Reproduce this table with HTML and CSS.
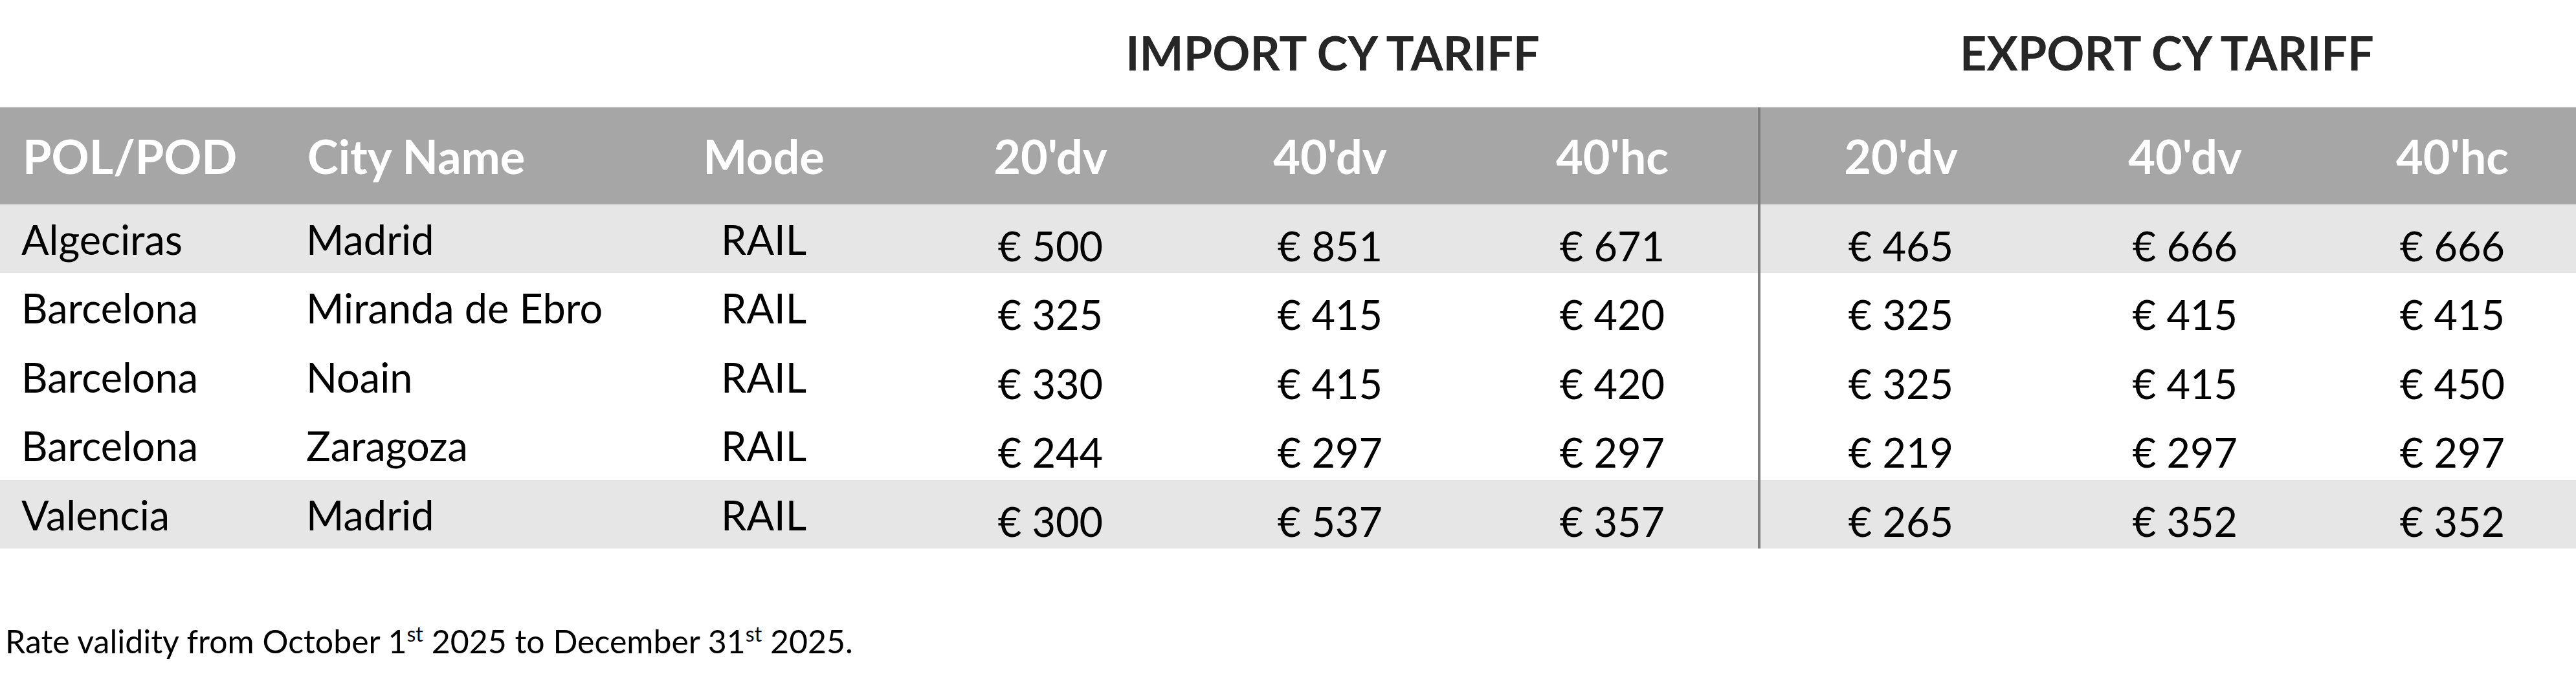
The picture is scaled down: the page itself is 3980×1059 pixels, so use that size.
FILE: index.html
```html
<!DOCTYPE html>
<html lang="en">
<head>
<meta charset="utf-8">
<title>CY Tariff</title>
<link rel="stylesheet" href="styles.css">
</head>
<body>
<div class="sheet">
  <div class="titles">
    <div class="title title-import">IMPORT CY TARIFF</div>
    <div class="title title-export">EXPORT CY TARIFF</div>
  </div>
  <div class="table">
    <div class="row head">
      <div class="cell left">POL/POD</div>
      <div class="cell left">City Name</div>
      <div class="cell center">Mode</div>
      <div class="cell center">20'dv</div>
      <div class="cell center">40'dv</div>
      <div class="cell center">40'hc</div>
      <div class="cell center sep">20'dv</div>
      <div class="cell center">40'dv</div>
      <div class="cell center">40'hc</div>
    </div>
    <div class="row body shade">
      <div class="cell left">Algeciras</div>
      <div class="cell left">Madrid</div>
      <div class="cell center">RAIL</div>
      <div class="cell center num">€ 500</div>
      <div class="cell center num">€ 851</div>
      <div class="cell center num">€ 671</div>
      <div class="cell center num sep">€ 465</div>
      <div class="cell center num">€ 666</div>
      <div class="cell center num">€ 666</div>
    </div>
    <div class="row body">
      <div class="cell left">Barcelona</div>
      <div class="cell left">Miranda de Ebro</div>
      <div class="cell center">RAIL</div>
      <div class="cell center num">€ 325</div>
      <div class="cell center num">€ 415</div>
      <div class="cell center num">€ 420</div>
      <div class="cell center num sep">€ 325</div>
      <div class="cell center num">€ 415</div>
      <div class="cell center num">€ 415</div>
    </div>
    <div class="row body">
      <div class="cell left">Barcelona</div>
      <div class="cell left">Noain</div>
      <div class="cell center">RAIL</div>
      <div class="cell center num">€ 330</div>
      <div class="cell center num">€ 415</div>
      <div class="cell center num">€ 420</div>
      <div class="cell center num sep">€ 325</div>
      <div class="cell center num">€ 415</div>
      <div class="cell center num">€ 450</div>
    </div>
    <div class="row body">
      <div class="cell left">Barcelona</div>
      <div class="cell left">Zaragoza</div>
      <div class="cell center">RAIL</div>
      <div class="cell center num">€ 244</div>
      <div class="cell center num">€ 297</div>
      <div class="cell center num">€ 297</div>
      <div class="cell center num sep">€ 219</div>
      <div class="cell center num">€ 297</div>
      <div class="cell center num">€ 297</div>
    </div>
    <div class="row body shade">
      <div class="cell left">Valencia</div>
      <div class="cell left">Madrid</div>
      <div class="cell center">RAIL</div>
      <div class="cell center num">€ 300</div>
      <div class="cell center num">€ 537</div>
      <div class="cell center num">€ 357</div>
      <div class="cell center num sep">€ 265</div>
      <div class="cell center num">€ 352</div>
      <div class="cell center num">€ 352</div>
    </div>
  </div>
  <p class="note">Rate validity from October 1<sup>st</sup> 2025 to December 31<sup>st</sup> 2025.</p>
</div>
</body>
</html>
```

FILE: styles.css
```css
* {
  box-sizing: border-box;
}

html, body {
  margin: 0;
  padding: 0;
  background: #ffffff;
}

body {
  font-family: Lato, "Open Sans", "Liberation Sans", sans-serif;
  color: #000000;
  width: 3980px;
  height: 1059px;
  overflow: hidden;
}

.sheet {
  --cols: 440px 518px 444px 442px 422px 450px 438px 444px 382px;
  display: flex;
  flex-direction: column;
}

.titles {
  display: grid;
  grid-template-columns: 1402px 1314px 1264px;
  height: 166px;
  padding-top: 45px;
}

.title {
  font-weight: 700;
  font-size: 72px;
  line-height: 1;
  color: #262626;
  text-align: center;
}

.title-import {
  grid-column: 2;
}

.title-export {
  grid-column: 3;
}

.table {
  display: flex;
  flex-direction: column;
}

.row {
  display: grid;
  grid-template-columns: var(--cols);
}

.row.head {
  height: 150px;
  background: #a6a6a6;
  color: #ffffff;
  font-weight: 700;
  font-size: 72px;
  line-height: 1;
}

.row.head .cell {
  display: flex;
  align-items: center;
}

.row.head .cell.left {
  padding-left: 35px;
}

.row.head .cell.center {
  justify-content: center;
}

.row.body {
  height: 106.4px;
  font-size: 63px;
  line-height: 1;
}

.row.body .cell {
  padding-top: 22px;
}

.row.body .cell.num {
  padding-top: 32px;
}

.row.shade {
  background: #e6e6e6;
}

.cell.left {
  padding-left: 33px;
  text-align: left;
}

.cell.center {
  text-align: center;
}

.cell.sep {
  border-left: 4px solid #808080;
}

.note {
  margin: 118px 0 0 8px;
  font-size: 50px;
  line-height: 1;
  color: #000000;
}

.note sup {
  font-size: 0.64em;
  line-height: 0;
  vertical-align: 0.55em;
}
```
